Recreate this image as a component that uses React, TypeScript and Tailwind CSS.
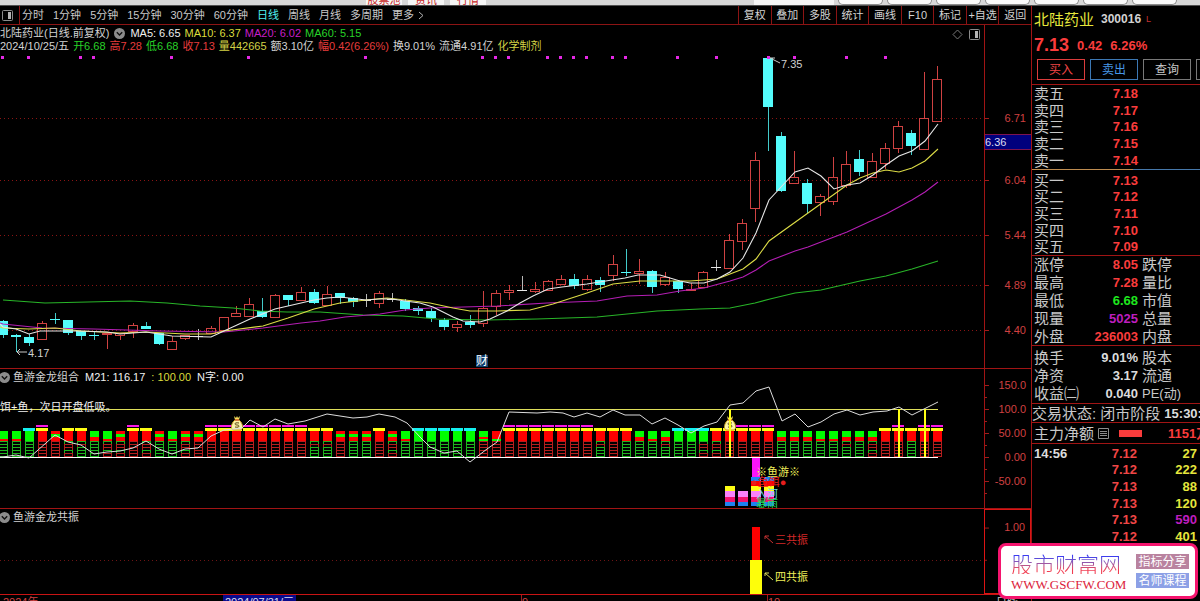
import React from "react";

type Candle = [kind: "r" | "c" | "w", top: number, bottom: number, high: number, low: number];

const candles: Candle[] = [
  ["c", 321, 335, 320, 338], ["c", 335, 337, 334, 352], ["c", 337, 343, 334, 346], ["r", 323, 339, 321, 339],
  ["c", 319, 320, 313, 324], ["c", 320, 333, 320, 335], ["c", 331, 336, 331, 340], ["c", 335, 336, 332, 340],
  ["r", 333, 334, 333, 349], ["r", 333, 335, 333, 340], ["r", 325, 331, 323, 338], ["c", 326, 329, 322, 329],
  ["c", 333, 344, 333, 345], ["r", 341, 349, 336, 349], ["r", 335, 338, 335, 340], ["w", 336, 337, 329, 340],
  ["r", 328, 333, 326, 333], ["r", 317, 330, 317, 330], ["r", 313, 316, 306, 316], ["r", 304, 316, 298, 316],
  ["c", 311, 317, 298, 318], ["r", 295, 317, 294, 317], ["c", 295, 300, 295, 306], ["r", 292, 300, 287, 301],
  ["c", 292, 303, 289, 304], ["r", 294, 305, 286, 305], ["c", 293, 298, 293, 304], ["c", 298, 302, 297, 307],
  ["w", 300, 301, 294, 307], ["r", 293, 303, 291, 308], ["w", 299, 300, 293, 302], ["c", 301, 309, 299, 311],
  ["c", 308, 311, 306, 315], ["c", 311, 318, 308, 322], ["c", 320, 327, 318, 330], ["r", 324, 327, 321, 332],
  ["c", 322, 325, 315, 328], ["r", 308, 323, 291, 327], ["r", 293, 306, 290, 315], ["r", 290, 292, 285, 300],
  ["w", 290, 291, 276, 291], ["r", 289, 291, 282, 293], ["r", 281, 290, 280, 291], ["r", 279, 284, 275, 284],
  ["c", 279, 286, 274, 289], ["r", 279, 289, 275, 291], ["c", 280, 285, 277, 292], ["r", 264, 275, 255, 281],
  ["c", 272, 273, 249, 276], ["r", 271, 273, 259, 284], ["c", 271, 287, 270, 293], ["r", 277, 284, 272, 286],
  ["c", 281, 289, 280, 293], ["r", 289, 290, 283, 291], ["r", 272, 287, 271, 288], ["w", 267, 268, 260, 271],
  ["r", 240, 268, 234, 269], ["r", 223, 241, 219, 250], ["r", 160, 208, 152, 222], ["c", 58, 107, 57, 151],
  ["c", 136, 191, 132, 192], ["r", 177, 183, 151, 183], ["c", 183, 204, 179, 213], ["r", 196, 202, 194, 216],
  ["r", 177, 201, 157, 205], ["r", 164, 185, 151, 188], ["c", 159, 172, 150, 176], ["r", 161, 177, 153, 177],
  ["r", 148, 163, 143, 169], ["r", 126, 148, 121, 153], ["c", 133, 146, 130, 155], ["r", 118, 149, 72, 149],
  ["r", 79, 121, 66, 121],
];

const ma5 =
  "0,324 3,327 16,329 29,334 40,331 81,331 107,332 120,334 146,332 172,336 211,337 224,331 250,319 275,309 301,303 314,300 327,298 340,297 366,300 379,299 392,299 405,301 420,303 433,307 453,317 463,321 480,322 490,319 507,311 520,303 533,296 548,289 562,287 587,284 612,280 625,278 638,275 660,275 680,281 690,283 704,283 717,279 730,272 743,258 756,233 769,200 782,186 795,172 808,168 821,176 834,189 847,185 860,183 873,175 886,165 899,156 912,151 925,141 938,124";
const ma10 =
  "0,327 3,328 29,329 55,328 81,331 120,333 146,332 185,334 211,334 224,331 263,326 288,318 314,309 340,303 366,300 387,298 405,300 430,303 453,308 470,311 497,311 530,310 553,304 587,293 613,284 640,281 690,281 717,279 743,269 756,259 769,241 808,213 847,185 860,178 873,173 886,170 899,172 912,168 925,161 938,149";
const ma20 =
  "0,323 3,324 42,328 94,329 159,331 224,332 263,328 301,323 320,321 345,317 380,314 405,310 430,308 497,306 547,303 597,301 627,296 657,295 680,291 704,288 730,281 743,277 756,270 769,261 795,251 808,247 821,242 847,232 886,214 912,200 925,192 938,182";
const ma60 =
  "3,300 45,303 130,301 167,303 200,306 233,308 260,311 287,312 320,312 363,315 403,316 437,319 487,320 537,319 597,317 657,311 700,309 730,308 755,303 770,299 795,293 821,290 860,281 886,276 912,269 938,261";

const signalDots = [2, 28, 80, 93, 171, 248, 365, 482, 495, 508, 547, 560, 573, 586, 612, 625, 677, 716, 768, 794, 846, 885];
const priceLevels: [string, number][] = [["6.71", 118], ["6.04", 180], ["5.44", 235], ["4.89", 285], ["4.40", 330]];

// Each column is cap + head + stack: see headSegments and stackRows.
const comboColumns = (
  "-tG -tG CGG MRR -sR YRm YRn -uG -tm -sm MRR YRm -sG -tG -sm -sR MRR MRR MRR MRR MRR MRR MRR MRR YRn YRn -sR -sG -sG YRR -sm -tG " +
  "CGG CGG CGG CGG CGG -vR -wR MRR MRR MRR MRR MRR MRR MRR YRn YRR YRG -uG -tG -un CGG CGG CGm YRm YRR MRR MRR MRR " +
  "-uG -uG -uG -tG -tG -un -uG -um YRR MRR YRG MRR MRR"
).split(" ");

const headSegments: Record<string, string> = {
  R: "RRRR", G: "GGGG", s: "RGRR", t: "GGGR", u: "GGRR", v: "GGRG", w: "RRRG",
};
const stackRows: Record<string, string> = { R: "RRRRR", G: "GGGGG", m: "GRRGR", n: "GRGGG" };

const oscillator =
  "0,457 3,457 16,455 29,458 55,435 68,442 81,445 94,454 107,452 120,451 133,448 146,441 159,449 172,454 185,449 198,448 211,436 224,430 242,428 250,420 263,427 275,419 288,424 305,421 327,414 353,418 367,417 379,414 395,417 407,423 420,437 430,447 444,453 457,451 470,462 487,449 497,442 509,412 537,413 550,412 563,413 574,417 587,413 600,417 613,410 625,415 640,415 652,424 665,418 678,425 691,433 704,426 717,422 730,405 743,403 756,391 769,387 782,421 795,414 808,427 821,422 834,414 847,410 860,415 873,412 887,411 899,407 912,415 938,402";

const columnX = (i: number) => Math.round(3 + i * 12.972);

const BRIGHT_RED = "#fe0000";
const BRIGHT_GREEN = "#00fe00";
const fontStack = "'Liberation Sans','Noto Sans CJK SC',sans-serif";

function CandleShape({ x, candle }: { x: number; candle: Candle }) {
  const [kind, top, bottom, high, low] = candle;
  if (kind === "r") {
    const h = Math.max(bottom - top, 1);
    return (
      <g stroke="#cf4242" fill="none">
        {high < top && <path d={`M${x + 0.5} ${high}V${top}`} />}
        {low > bottom && <path d={`M${x + 0.5} ${bottom + 1}V${low}`} />}
        <rect x={x - 4.5} y={top + 0.5} width={9} height={h} />
      </g>
    );
  }
  const color = kind === "c" ? "#54fcfc" : "#e6e6e6";
  return (
    <g fill={color}>
      <rect x={x} y={high} width={1} height={low - high} opacity={0.8} />
      <rect x={x - 5} y={top} width={10} height={Math.max(bottom - top, 1)} />
    </g>
  );
}

function PriceChart() {
  return (
    <svg className="block h-[314px] w-full" viewBox="0 54 984 314" preserveAspectRatio="none" fontFamily={fontStack} fontSize="11">
      <g stroke="#8a1414" strokeDasharray="1 3" shapeRendering="crispEdges">
        {priceLevels.map(([label, y]) => (
          <path key={label} d={`M0 ${y + 0.5}H984`} />
        ))}
      </g>
      <g shapeRendering="crispEdges">
        {candles.map((c, i) => (
          <CandleShape key={i} x={columnX(i)} candle={c} />
        ))}
      </g>
      <g fill="#e628e6">
        {signalDots.map((x) => (
          <rect key={x} x={x - 1} y={56} width={3} height={3} />
        ))}
      </g>
      <g fill="none" strokeWidth="1.1">
        <polyline points={ma60} stroke="#28b428" />
        <polyline points={ma20} stroke="#b41eb4" />
        <polyline points={ma10} stroke="#dcdc46" />
        <polyline points={ma5} stroke="#e6e6e6" />
      </g>
      <path d="M770 58L780 63M770 58l5 0" stroke="#c8c8c8" fill="none" />
      <text x="781" y="68" fill="#d0d0d0">7.35</text>
      <path d="M17 352H27M20 349l-3 3l3 3" stroke="#c8c8c8" fill="none" />
      <text x="28" y="357" fill="#d0d0d0">4.17</text>
      <rect x="476" y="355" width="12" height="12" fill="#0c3c6c" />
      <text x="476" y="365" fill="#ffffff" fontSize="12">财</text>
    </svg>
  );
}

function MoneyBag({ x }: { x: number }) {
  return (
    <g transform={`translate(${x} 424)`}>
      <path d="M-3 -8L-1 -6L0 -8L1 -6L3 -8L2 -4H-2Z" fill="#f6e05a" />
      <path d="M-2 -4H2C6 -1 7 6 3 6H-3C-7 6 -6 -1 -2 -4Z" fill="#fbf3a8" stroke="#c8a020" />
      <path d="M2 -1C-3 -2 -3 1 0 1S3 4 -2 3" fill="none" stroke="#5a4410" />
      <path d="M-2 -4H2" stroke="#d03020" />
    </g>
  );
}

function ComboColumn({ x, code }: { x: number; code: string }) {
  const [cap, head, stack] = code.split("");
  const heads = headSegments[head].split("");
  const rows = stackRows[stack].split("");
  return (
    <g>
      {cap === "M" && <rect x={x - 6} y={425} width={12} height={2} fill="#fa14e6" />}
      {cap !== "-" && <rect x={x - 6} y={428} width={12} height={3} fill={cap === "C" ? "#14f0f0" : "#fefe14"} />}
      {heads.map((h, i) => (
        <rect key={i} x={x - 4} y={431 + i * 3 - (i > 2 ? 1 : 0)} width={9} height={3} fill={h === "R" ? BRIGHT_RED : BRIGHT_GREEN} />
      ))}
      {rows.map((r, i) => (
        <rect key={i} x={x - 3.5} y={441.5 + i * 3} width={8} height={3} fill="none" stroke={r === "R" ? "#b41e1e" : "#1eb41e"} />
      ))}
    </g>
  );
}

function ComboChart() {
  return (
    <svg className="block h-[123px] w-full" viewBox="0 385 984 123" preserveAspectRatio="none" fontFamily={fontStack} fontSize="11">
      <g shapeRendering="crispEdges">
        {comboColumns.map((code, i) => (
          <ComboColumn key={i} x={columnX(i)} code={code} />
        ))}
        <rect x="0" y="409" width="938" height="1" fill="#dede5a" />
        <rect x="0" y="457" width="938" height="1" fill="#ffffff" />
      </g>
      <MoneyBag x={237} />
      <MoneyBag x={730} />
      <g fill="#fefe14" shapeRendering="crispEdges">
        <rect x="729" y="409" width="2" height="48" />
        <rect x="898" y="409" width="2" height="48" />
        <rect x="924" y="409" width="2" height="48" />
      </g>
      <polyline points={oscillator} fill="none" stroke="#dcdcdc" />
      <g shapeRendering="crispEdges">
        <rect x="752" y="458" width="8" height="19" fill="#fa14fa" />
        {[725, 738, 751, 764].map((x, i) => (
          <g key={x}>
            {i > 1 && <rect x={x} y="477" width="10" height="5" fill="#1e82f0" />}
            {i > 1 && <rect x={x} y="481" width="10" height="6" fill={BRIGHT_RED} />}
            {i !== 1 && <rect x={x} y="486" width="10" height="6" fill="#fefe14" />}
            <rect x={x} y="491" width="10" height="6" fill="#fa82fa" />
            <rect x={x} y="497" width="10" height="5" fill="#f0146e" />
            <rect x={x} y="502" width="10" height="4" fill="#1e82f0" />
          </g>
        ))}
      </g>
      <text x="0" y="411" fill="#f0f0f0">饵+鱼，次日开盘低吸。</text>
      <text x="756" y="476" fill="#f0f05a">※鱼游※</text>
      <text x="751" y="486" fill="#e61e1e">●鱼饵●</text>
      <text x="756" y="498" fill="#64dce6">入河</text>
      <text x="756" y="508" fill="#28dc5a">暴雨</text>
    </svg>
  );
}

function ResonanceChart() {
  return (
    <svg className="block h-[69px] w-full" viewBox="0 525 984 69" preserveAspectRatio="none" fontFamily={fontStack} fontSize="11">
      <path d="M0 560.5H984" stroke="#6e1414" strokeDasharray="1 3" shapeRendering="crispEdges" />
      <rect x="752" y="527" width="8" height="33" fill={BRIGHT_RED} />
      <rect x="750" y="560" width="12" height="34" fill="#fefe0a" />
      <g fill="none">
        <path d="M773 543L765 536M765 539V536H769" stroke="#c83232" />
        <path d="M773 580L765 573M765 576V573H769" stroke="#dcdc5a" />
      </g>
      <text x="775" y="544" fill="#d22828">三共振</text>
      <text x="775" y="581" fill="#f0f05a">四共振</text>
    </svg>
  );
}

function Axis({ top, height, labels, minor = [], className, children }: {
  top: number;
  height: number;
  labels: [string, number][];
  minor?: number[];
  className: string;
  children?: React.ReactNode;
}) {
  return (
    <svg className={className} viewBox={`0 ${top} 46 ${height}`} fontFamily={fontStack} fontSize="11" fill="#d04040">
      {labels.map(([label, y]) => (
        <g key={label}>
          <path d={`M0 ${y + 0.5}H4`} stroke="#a01c1c" />
          <text x="41" y={y + 4} textAnchor="end">{label}</text>
        </g>
      ))}
      {minor.map((y) => (
        <path key={y} d={`M0 ${y + 0.5}H2`} stroke="#a01c1c" />
      ))}
      {children}
    </svg>
  );
}

function ToggleIcon() {
  return (
    <svg className="size-[11px] shrink-0" viewBox="0 0 11 11" aria-hidden="true">
      <circle cx="5.5" cy="5.5" r="5.5" fill="#8c8c8c" />
      <path d="M2.8 4.3L5.5 7L8.2 4.3" fill="none" stroke="#101010" strokeWidth="1.4" />
    </svg>
  );
}

function SplitIcon() {
  return (
    <svg className="size-[11px] shrink-0" viewBox="0 0 11 11" aria-hidden="true">
      <rect x="0.5" y="0.5" width="10" height="10" rx="1" fill="none" stroke="#8c8c8c" />
      <rect x="6" y="2" width="3" height="7" fill="#b4b4b4" />
    </svg>
  );
}

const periods = ["分时", "1分钟", "5分钟", "15分钟", "30分钟", "60分钟", "日线", "周线", "月线", "多周期", "更多"];
const tools = ["复权", "叠加", "多股", "统计", "画线", "F10", "标记", "+自选", "返回"];

function Toolbar() {
  return (
    <nav className="flex h-[19px] items-center justify-between border-b border-[#8c1414]">
      <div className="flex h-full items-center gap-[9px] text-[#c8c8c8]">
        <button type="button" aria-label="布局" className="-mr-[7px] flex h-full w-5 items-center border-r border-[#8c1414] pl-0.5">
          <SplitIcon />
        </button>
        {periods.map((p) => (
          <button key={p} type="button" className={p === "日线" ? "flex items-center text-[#50f0f0]" : "flex items-center"}>
            {p}
            {p === "更多" && (
              <svg className="ml-1 h-[9px] w-[6px]" viewBox="0 0 6 9" aria-hidden="true">
                <path d="M1 1L5 4.5L1 8" fill="none" stroke="#b4b4b4" />
              </svg>
            )}
          </button>
        ))}
      </div>
      <div className="grid h-full w-[293px] grid-cols-9 text-[#d2d2d2]">
        {tools.map((t) => (
          <button key={t} type="button" className="border-l border-[#8c1414] text-center whitespace-nowrap">
            {t}
          </button>
        ))}
      </div>
    </nav>
  );
}

const quoteLine: [string, string][] = [
  ["2024/10/25/五", "text-[#d2d2d2]"],
  ["开6.68", "text-[#28d228]"],
  ["高7.28", "text-[#e63c3c]"],
  ["低6.68", "text-[#28d228]"],
  ["收7.13", "text-[#e63c3c]"],
  ["量442665", "text-[#d2d246]"],
  ["额3.10亿", "text-[#d2d2d2]"],
  ["幅0.42(6.26%)", "text-[#e63c3c]"],
  ["换9.01%", "text-[#d2d2d2]"],
  ["流通4.91亿", "text-[#d2d2d2]"],
  ["化学制剂", "text-[#d2d246]"],
];

const sells = [["卖五", "7.18"], ["卖四", "7.17"], ["卖三", "7.16"], ["卖二", "7.15"], ["卖一", "7.14"]];
const buys = [["买一", "7.13"], ["买二", "7.12"], ["买三", "7.11"], ["买四", "7.10"], ["买五", "7.09"]];
const stats = [
  ["涨停", "8.05", "跌停", "text-[#fa3c3c]"],
  ["最高", "7.28", "量比", "text-[#fa3c3c]"],
  ["最低", "6.68", "市值", "text-[#1ee61e]"],
  ["现量", "5025", "总量", "text-[#be1ebe]"],
  ["外盘", "236003", "内盘", "text-[#fa3c3c]"],
];
const fundamentals = [
  ["换手", "9.01%", "股本", "text-[#dcdcdc]"],
  ["净资", "3.17", "流通", "text-[#dcdcdc]"],
  ["收益㈡", "0.040", "PE(动)", "text-[#dcdcdc]"],
];
const ticks = [
  ["14:56", "7.12", "27", "text-[#e6e63c]"],
  ["", "7.12", "222", "text-[#e6e63c]"],
  ["", "7.13", "88", "text-[#e6e63c]"],
  ["", "7.13", "120", "text-[#e6e63c]"],
  ["", "7.13", "590", "text-[#be1ebe]"],
  ["", "7.12", "401", "text-[#e6e63c]"],
];

function QuoteRows({ rows, className }: { rows: string[][]; className: string }) {
  return (
    <dl className={className}>
      {rows.map(([label, value, next, tone]) => (
        <div key={label} className="grid grid-cols-[106px_1fr] items-center gap-1">
          <div className="flex items-center justify-between pl-0.5">
            <dt className="text-[15px] whitespace-nowrap">{label}</dt>
            <dd className={tone ? `text-[13px] font-bold ${tone}` : "text-[13px] font-bold text-[#fa3c3c]"}>{value}</dd>
          </div>
          {next && <dt className={next.startsWith("PE") ? "text-[13px]" : "text-[15px]"}>{next}</dt>}
        </div>
      ))}
    </dl>
  );
}

function QuotePanel() {
  return (
    <aside className="flex w-[169px] shrink-0 flex-col overflow-hidden border-l border-[#a01414] leading-none text-[#c8c8c8]">
      <h1 className="flex h-[26px] shrink-0 items-center gap-[7px] pl-0.5 text-[#e6e63c]">
        <span className="text-[15px]">北陆药业</span>
        <span className="text-[12px] font-bold text-[#d2d2d2]">300016</span>
        <span className="-ml-0.5 text-[9px] text-[#c83232]">L</span>
      </h1>
      <p className="flex h-[26px] shrink-0 items-center gap-2 pl-0.5 text-[13px] font-bold text-[#fa3c3c]">
        <span className="text-[18px]">7.13</span>
        <span>0.42</span>
        <span>6.26%</span>
      </p>
      <div className="flex h-[27px] shrink-0 items-start gap-[5px] border-b border-[#a01414] pt-px pl-[5px] text-[12px]">
        <button type="button" className="h-[21px] w-12 shrink-0 border border-[#dc3c3c] text-[#f04646]">买入</button>
        <button type="button" className="h-[21px] w-12 shrink-0 border border-[#3c78b4] text-[#4696e6]">卖出</button>
        <button type="button" className="h-[21px] w-12 shrink-0 border border-[#787878] text-[#c8c8c8]">查询</button>
        <button type="button" aria-label="更多操作" className="h-[21px] w-12 shrink-0 border border-[#787878]" />
      </div>
      <QuoteRows rows={sells} className="grid h-[84px] shrink-0 auto-rows-fr" />
      <div className="flex h-px shrink-0">
        <div className="flex-3 bg-[#be8c50]" />
        <div className="flex-2 bg-[#4678aa]" />
      </div>
      <QuoteRows rows={buys} className="grid h-[86px] shrink-0 auto-rows-fr border-b border-[#a01414] pt-0.5" />
      <QuoteRows rows={stats} className="grid h-[90px] shrink-0 auto-rows-fr border-b border-[#a01414]" />
      <QuoteRows rows={fundamentals} className="grid h-[58px] shrink-0 auto-rows-fr border-b border-[#a01414] pt-0.5" />
      <p className="flex h-[19px] shrink-0 items-center gap-1 border-b border-[#a01414] text-[15px] whitespace-nowrap">
        <span>交易状态: 闭市阶段</span>
        <span className="text-[13px] font-bold text-[#dcdcdc]">15:30:</span>
      </p>
      <p className="flex h-[21px] shrink-0 items-center border-b border-[#a01414] pl-0.5 text-[15px] whitespace-nowrap">
        <span>主力净额</span>
        <svg className="ml-1 size-[11px] shrink-0" viewBox="0 0 11 11" aria-hidden="true">
          <path d="M0.5 0.5H10.5V10.5H0.5ZM2 3.5H9M2 5.5H9M2 7.5H9" fill="none" stroke="#8c8c8c" />
        </svg>
        <span className="ml-2.5 h-[7px] w-[23px] shrink-0 bg-[#fa3c3c]" />
        <span className="ml-[26px] text-[13px] font-bold text-[#fa3c3c]">1151万</span>
      </p>
      <table className="mt-px w-full shrink-0 border-collapse text-[13px] font-bold">
        <tbody>
          {ticks.map(([time, price, volume, tone], i) => (
            <tr key={i} className={i % 3 === 0 ? "h-4" : "h-[17px]"}>
              <td className="w-[52px] p-0 pl-0.5 align-middle text-[#dcdcdc]">{time}</td>
              <td className="w-[53px] p-0 text-right align-middle text-[#f04646]">{price}</td>
              <td className={`p-0 pr-[3px] text-right align-middle ${tone}`}>{volume}</td>
            </tr>
          ))}
        </tbody>
      </table>
    </aside>
  );
}

function Watermark() {
  return (
    <a
      href="#"
      className="absolute right-0.5 bottom-0.5 flex h-[56px] w-[200px] items-center justify-between rounded-lg border-[3px] border-[#f5146e] bg-white pr-1.5 pl-2.5 leading-none"
    >
      <span className="flex flex-col gap-1">
        <span className="bg-linear-to-b from-[#3c3cf0] from-20% to-[#f03c50] to-80% bg-clip-text font-['Noto_Sans_CJK_SC',sans-serif] text-[22px] font-light text-transparent">
          股市财富网
        </span>
        <span className="font-['Liberation_Serif',serif] text-[13px] text-[#dc1e3c]">WWW.GSCFW.COM</span>
      </span>
      <span className="flex flex-col gap-1 text-center text-[12px] text-white">
        <span className="flex h-[15px] w-[53px] items-center justify-center bg-[#b9829f]">指标分享</span>
        <span className="flex h-[15px] w-[53px] items-center justify-center bg-[#8ca0e6]">名师课程</span>
      </span>
    </a>
  );
}

function WindowStrip() {
  return (
    <div className="flex h-[6px] shrink-0 items-end overflow-hidden border-b border-[#505050] bg-[#d7d7d7] text-[11px] leading-[10px] text-[#c81e1e]">
      <div className="ml-[366px] flex h-full items-end gap-[6px]">
        <span className="w-9 bg-[#f5f5f5] text-center">股票池</span>
        <span className="w-9 bg-[#f5f5f5] text-center">资讯</span>
        <span className="w-9 bg-[#f5f5f5] text-center">行情</span>
      </div>
      <span className="ml-[268px] h-full w-20 bg-[#f5f5f5]" />
      <div className="ml-1 flex h-full gap-1">
        {[0, 1, 2, 3, 4, 5, 6].map((n) => (
          <span key={n} className="h-[5px] w-[45px] rounded-b-md border-x border-b border-[#8c8c8c] bg-[#fafafa]" />
        ))}
      </div>
    </div>
  );
}

function DateAxis() {
  return (
    <footer className="flex h-[7px] shrink-0 overflow-hidden border-t border-[#c81414] leading-[14px] text-[#d04040]">
      <span className="w-[223px] shrink-0 pl-[3px]">2024年</span>
      <span className="h-4 w-[73px] shrink-0 bg-[#0a0a8c] text-center whitespace-nowrap text-[#dcdcf0]">2024/07/31/三</span>
      <span className="ml-[225px] w-[246px] shrink-0 border-l border-[#a01c1c]">9</span>
      <span className="w-[229px] shrink-0 border-l border-[#a01c1c]">10</span>
      <span className="text-[#c8c8c8]">日线</span>
    </footer>
  );
}

export default function App() {
  return (
    <div className="relative flex h-screen w-full flex-col overflow-hidden bg-black font-['Liberation_Sans','Noto_Sans_CJK_SC',sans-serif] text-[11px] leading-[13px]">
      <WindowStrip />
      <div className="flex min-h-0 flex-1">
        <main className="flex min-w-0 flex-1 flex-col">
          <Toolbar />
          <section className="flex border-b border-[#a01414]">
            <div className="min-w-0 flex-1">
              <div className="flex h-[29px] justify-between pt-0.5 pr-1">
                <div className="whitespace-nowrap">
                  <p className="flex items-center gap-1 text-[#d2d2d2]">
                    <span>北陆药业(日线.前复权)</span>
                    <span className="mx-px">
                      <ToggleIcon />
                    </span>
                    <span className="text-[#f0f0f0]">MA5: 6.65</span>
                    <span className="text-[#dcdc3c]">MA10: 6.37</span>
                    <span className="text-[#c81ec8]">MA20: 6.02</span>
                    <span className="text-[#28d228]">MA60: 5.15</span>
                  </p>
                  <p className="flex gap-1">
                    {quoteLine.map(([text, tone]) => (
                      <span key={text} className={tone}>{text}</span>
                    ))}
                  </p>
                </div>
                <div className="flex h-3.5 items-center gap-1.5">
                  <svg className="size-[11px]" viewBox="0 0 11 11" aria-hidden="true">
                    <path d="M5.5 1L10 5.5L5.5 10L1 5.5Z" fill="none" stroke="#787878" />
                  </svg>
                  <SplitIcon />
                </div>
              </div>
              <PriceChart />
            </div>
            <Axis top={25} height={343} labels={priceLevels} className="block h-[343px] w-[47px] shrink-0 border-l border-[#a01414]">
              <rect x="0" y="135" width="46" height="14" fill="#00007d" />
              <path d="M0 134.5H46M0 149.5H46" stroke="#7d1450" />
              <text x="0" y="146" fill="#dcdcf0">6.36</text>
            </Axis>
          </section>
          <section className="flex border-b border-[#a01414]">
            <div className="min-w-0 flex-1">
              <p className="flex h-4 items-center gap-1.5 whitespace-nowrap text-[#d2d2d2]">
                <span className="-ml-px flex items-center gap-[3px]">
                  <ToggleIcon />
                  鱼游金龙组合
                </span>
                <span className="text-[#f0f0f0]">M21: 116.17</span>
                <span className="text-[#dcdc3c]">: 100.00</span>
                <span className="text-[#f0f0f0]">N字: 0.00</span>
              </p>
              <ComboChart />
            </div>
            <Axis
              top={369}
              height={139}
              labels={[["150.0", 385], ["100.0", 409], ["50.00", 433], ["0.00", 457], ["-50.00", 481]]}
              minor={[397, 421, 445, 469, 493]}
              className="block h-[139px] w-[47px] shrink-0 border-l border-[#a01414]"
            />
          </section>
          <section className="flex">
            <div className="min-w-0 flex-1">
              <p className="-ml-px flex h-4 items-center gap-[3px] text-[#d2d2d2]">
                <ToggleIcon />
                鱼游金龙共振
              </p>
              <ResonanceChart />
            </div>
            <Axis top={509} height={85} labels={[["1.00", 527]]} minor={[560]} className="block h-[85px] w-[47px] shrink-0 border border-[#dc1414]" />
          </section>
          <DateAxis />
        </main>
        <QuotePanel />
      </div>
      <Watermark />
    </div>
  );
}
